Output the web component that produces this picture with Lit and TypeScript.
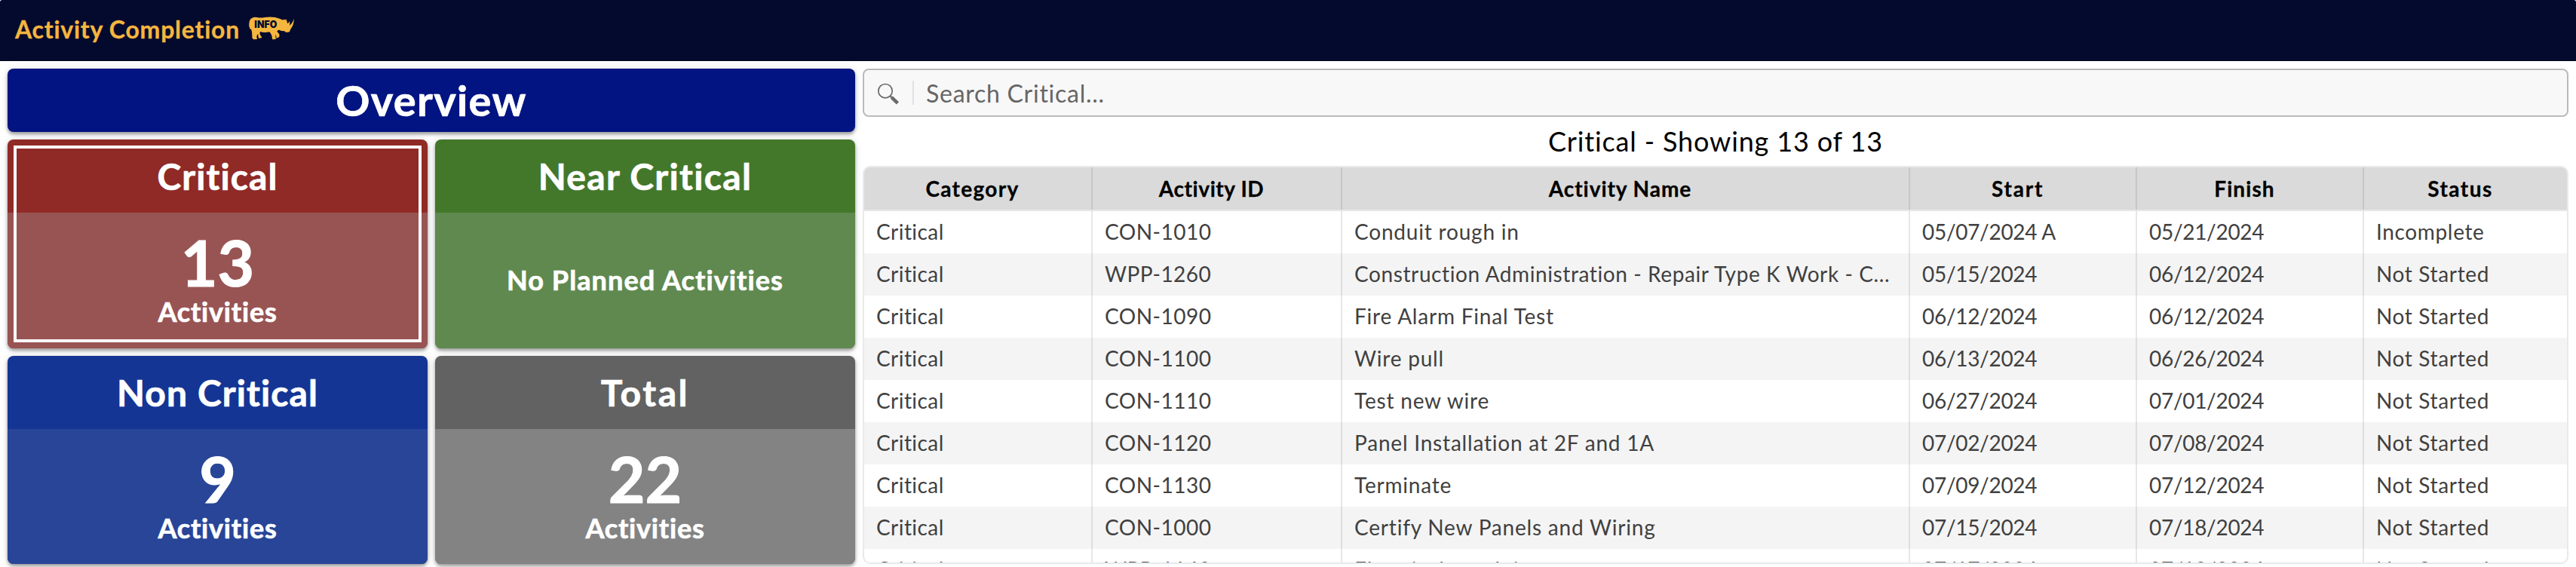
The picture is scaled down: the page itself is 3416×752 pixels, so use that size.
import { LitElement, html, css } from "lit";

type Card = { kind: string; title: string; count: number; track: number };

const cards: Card[] = [
  { kind: "critical", title: "Critical", count: 13, track: 1.1 },
  { kind: "near", title: "Near Critical", count: 0, track: 1.35 },
  { kind: "non", title: "Non Critical", count: 9, track: 1.1 },
  { kind: "total", title: "Total", count: 22, track: 2.6 },
];

const columns: [string, number][] = [
  ["Category", 1.3],
  ["Activity ID", 0.6],
  ["Activity Name", 0.95],
  ["Start", 1.8],
  ["Finish", 1.1],
  ["Status", 1.5],
];

const rows: string[][] = [
  ["Critical", "CON-1010", "Conduit rough in", "05/07/2024 A", "05/21/2024", "Incomplete"],
  ["Critical", "WPP-1260", "Construction Administration - Repair Type K Work - C...", "05/15/2024", "06/12/2024", "Not Started"],
  ["Critical", "CON-1090", "Fire Alarm Final Test", "06/12/2024", "06/12/2024", "Not Started"],
  ["Critical", "CON-1100", "Wire pull", "06/13/2024", "06/26/2024", "Not Started"],
  ["Critical", "CON-1110", "Test new wire", "06/27/2024", "07/01/2024", "Not Started"],
  ["Critical", "CON-1120", "Panel Installation at 2F and 1A", "07/02/2024", "07/08/2024", "Not Started"],
  ["Critical", "CON-1130", "Terminate", "07/09/2024", "07/12/2024", "Not Started"],
  ["Critical", "CON-1000", "Certify New Panels and Wiring", "07/15/2024", "07/18/2024", "Not Started"],
  ["Critical", "WPP-1140", "Electrical rough in", "07/17/2024", "07/18/2024", "Not Started"],
];

const cellKinds = ["category", "id", "name", "date", "date", "status"];

class AppRoot extends LitElement {
  static styles = css`
    :host {
      display: flex;
      flex-direction: column;
      height: 752px;
      overflow: hidden;
      background: #fff;
      font-family: Lato, "Open Sans", sans-serif;
      color: #000;
      white-space: nowrap;
    }
    * { box-sizing: border-box; }
    .topbar {
      height: 81px;
      flex: none;
      display: flex;
      align-items: flex-start;
      padding: 19px 20px 0;
      background: #040a2d;
      border-bottom: 1px solid #02051c;
      border-radius: 3px 3px 0 0;
      color: #f5b63f;
    }
    .brand {
      font-size: 32px;
      line-height: 40px;
      font-weight: 700;
      letter-spacing: 0.76px;
      width: 310px;
      -webkit-text-stroke: 0.3px currentColor;
    }
    .rhino { width: 60px; height: 31px; margin-top: 3px; }
    .rhino path { fill: #f5b63f; }
    .rhino text { fill: #040a2d; font: 900 38px Inter, sans-serif; }
    .page {
      flex: 1;
      min-height: 0;
      display: grid;
      grid-template-columns: 1124px 1fr;
      gap: 10px;
      padding: 10px 10px 4px;
    }
    .overview {
      display: grid;
      grid-template-columns: 1fr 1fr;
      grid-template-rows: 84px 277px 276px;
      gap: 10px;
    }
    .banner, .card {
      border-radius: 8px;
      box-shadow: 0 3px 4px rgba(0, 0, 0, 0.36), 0 0 12px rgba(0, 0, 0, 0.1);
      color: #fff;
      font-weight: 700;
      -webkit-text-stroke: 0.7px currentColor;
    }
    .banner {
      grid-column: 1 / 3;
      display: flex;
      align-items: center;
      justify-content: center;
      padding-bottom: 1px;
      background: #021482;
      font-size: 56px;
      letter-spacing: 1.3px;
    }
    .card { display: flex; flex-direction: column; overflow: hidden; }
    .card h2 {
      margin: 0;
      height: 97px;
      line-height: 97px;
      text-align: center;
      font-size: 48px;
      font-weight: 700;
    }
    .body { flex: 1; display: flex; flex-direction: column; align-items: center; padding-top: 24px; }
    .body.empty { justify-content: center; padding: 0 0 2px; font-size: 36px; letter-spacing: 1.1px; }
    .count { font-size: 84px; line-height: 84px; -webkit-text-stroke: 1.2px currentColor; }
    .label { font-size: 36px; line-height: 44px; letter-spacing: 0.8px; margin-top: 1px; }
    .critical { background: #902a26; }
    .critical .body { background: #985453; }
    .near { background: #43782b; }
    .near .body { background: #5f894f; }
    .non { background: #153595; }
    .non .body { background: #284598; }
    .total { background: #626262; }
    .total .body { background: #838383; }
    .frame { display: grid; }
    .frame > * { grid-area: 1 / 1; }
    .ring { margin: 8px; border: 4px solid #fff; }
    .list { display: flex; flex-direction: column; min-height: 0; min-width: 0; }
    .search {
      height: 64px;
      flex: none;
      display: flex;
      align-items: center;
      border: 2px solid #bababa;
      border-radius: 8px;
      background: #f8f8f8;
      padding-left: 16px;
      color: #666;
      font-size: 32px;
      letter-spacing: 0.74px;
    }
    .search svg { width: 32px; height: 32px; }
    .rule { width: 2px; height: 32px; background: #e1e1e1; margin: 0 16px; }
    .caption {
      height: 65px;
      line-height: 65px;
      flex: none;
      text-align: center;
      font-size: 36px;
      letter-spacing: 0.85px;
    }
    .table {
      flex: 1;
      min-height: 0;
      overflow: hidden;
      border: 2px solid #e9e9e9;
      border-radius: 10px;
      font-size: 28px;
    }
    .row { display: grid; grid-template-columns: 303px 331px 753px 301px 301px 1fr; height: 56px; color: #404040; }
    .row:nth-child(odd) { background: #f4f4f4; }
    .cell { padding: 0 10px 0 16px; line-height: 55px; border-right: 2px solid #e7e7e7; overflow: hidden; }
    .row:nth-child(odd) .cell { border-color: #dedede; }
    .row .cell:last-child { border-right: none; }
    .row.head { height: 58px; background: #dadada; border-bottom: 2px solid #e6e6e6; color: #000; }
    .row.head .cell {
      padding: 0 14px 0 0;
      line-height: 56px;
      text-align: center;
      font-weight: 700;
      border-color: #c6c6c6;
      -webkit-text-stroke: 0.3px currentColor;
    }
    .category { letter-spacing: 0.45px; }
    .id { letter-spacing: 0.5px; }
    .name { letter-spacing: 0.8px; }
    .name.long { letter-spacing: 0.6px; }
    .date { letter-spacing: -0.3px; }
    .status { letter-spacing: 0.65px; }
  `;

  card(c: Card) {
    return html`
      <div class="frame">
        <section class="card ${c.kind}">
          <h2 style="letter-spacing:${c.track}px">${c.title}</h2>
          ${c.count
            ? html`<div class="body"><span class="count">${c.count}</span><span class="label">Activities</span></div>`
            : html`<div class="body empty">No Planned Activities</div>`}
        </section>
        ${c.kind === "critical" ? html`<div class="ring"></div>` : ""}
      </div>`;
  }

  render() {
    return html`
      <header class="topbar">
        <span class="brand">Activity Completion</span>
        <svg class="rhino" viewBox="0 0 180 93">
          <path d="M14 5Q20 1 32 3Q48 6 62 3Q85 0 104 3Q120 7 137 14L140 10L144 14L149 10L151 18L154 28Q160 24 161 17Q165 28 161 37Q174 26 179 8Q180 30 170 44Q164 50 162 61L149 63L141 58Q128 58 121 53Q113 53 112 59Q122 68 122 76Q120 86 108 86Q112 78 106 72L107 90L94 91Q92 84 91 75Q87 66 82 61Q60 66 45 60Q42 68 46 74Q52 80 51 85L39 86Q36 76 37 68Q32 72 31 80L33 90L18 91L13 84Q14 66 10 52Q2 48 1 38Q-1 10 14 5Z"/>
          <text x="22" y="46" textLength="90" lengthAdjust="spacingAndGlyphs">INFO</text>
        </svg>
      </header>
      <main class="page">
        <div class="overview">
          <div class="banner">Overview</div>
          ${cards.map((c) => this.card(c))}
        </div>
        <div class="list">
          <div class="search">
            <svg viewBox="0 0 32 32" fill="none" stroke="#6a6a6a">
              <circle cx="12" cy="13.7" r="9.2" stroke-width="1.7"/>
              <path d="M18.6 20.4l2.2 2.1" stroke-width="2.4"/>
              <path d="M20.4 22.2l8 7.6" stroke-width="4.6"/>
            </svg>
            <span class="rule"></span>
            <span>Search Critical...</span>
          </div>
          <div class="caption">Critical - Showing 13 of 13</div>
          <div class="table">
            <div class="row head">
              ${columns.map(([t, track]) => html`<div class="cell" style="letter-spacing:${track}px">${t}</div>`)}
            </div>
            ${rows.map(
              (r) => html`<div class="row">
                ${r.map((t, i) => html`<div class="cell ${cellKinds[i]} ${t.length > 40 ? "long" : ""}">${t}</div>`)}
              </div>`
            )}
          </div>
        </div>
      </main>`;
  }
}
customElements.define("app-root", AppRoot);
